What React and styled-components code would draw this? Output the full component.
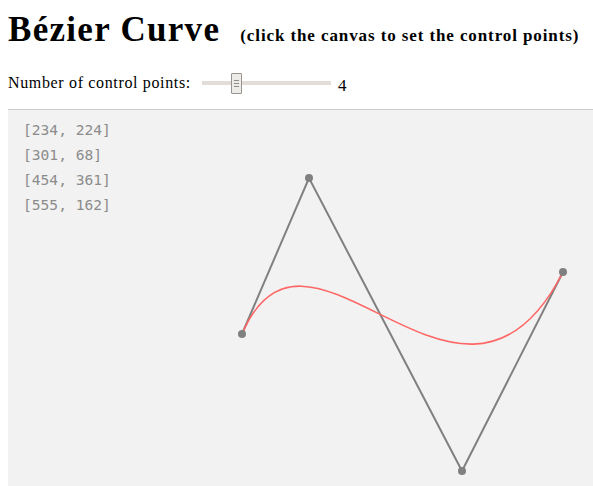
import React from 'react'
import styled, { createGlobalStyle } from 'styled-components'

const GlobalStyle = createGlobalStyle`
    html, body {
        overflow: hidden;
    }
    body {
        margin: 8px 0 0 8px;
        font-family: "Liberation Serif", "DejaVu Serif", serif;
        color: #000;
        background: #fff;
    }
`

const points = [
    [234, 224],
    [301, 68],
    [454, 361],
    [555, 162]
]

const App = () => {
    const [count, setCount] = React.useState(4)
    const [p0, p1, p2, p3] = points
    const polyline = points.map(([x, y]) => `${x},${y}`).join(' ')
    const curve = `M${p0[0]} ${p0[1]} C${p1[0]} ${p1[1]} ${p2[0]} ${p2[1]} ${p3[0]} ${p3[1]}`
    return (
        <>
            <GlobalStyle />
            <Header>
                <Title>Bézier Curve</Title>
                <Hint>(click the canvas to set the control points)</Hint>
            </Header>
            <Controls>
                <Label htmlFor='count'>Number of control points:</Label>
                <Range
                    id='count'
                    type='range'
                    min={2}
                    max={10}
                    value={count}
                    onChange={(e) => setCount(Number(e.target.value))}
                />
                <Value>{count}</Value>
            </Controls>
            <Board>
                <svg width='600' height='400' viewBox='0 0 600 400'>
                    {points.map(([x, y], i) => (
                        <Coord key={i} x='15' y={25 * (i + 1)}>
                            [{x}, {y}]
                        </Coord>
                    ))}
                    <polyline points={polyline} fill='none' stroke='#808080' strokeWidth='2' />
                    <path d={curve} fill='none' stroke='#ff6666' strokeWidth='1.6' />
                    {points.map(([x, y], i) => (
                        <circle key={i} cx={x} cy={y} r='4' fill='#808080' />
                    ))}
                </svg>
            </Board>
        </>
    )
}

const Header = styled.div`
    display: flex;
    align-items: baseline;
    gap: 20px;
    margin-top: 5px;
`

const Title = styled.h1`
    margin: 0;
    font-size: 35px;
    line-height: 34px;
    font-weight: bold;
    letter-spacing: 1.3px;
`

const Hint = styled.span`
    font-size: 17px;
    font-weight: bold;
    letter-spacing: 0.9px;
`

const Controls = styled.div`
    display: flex;
    align-items: center;
    margin-top: 24px;
    height: 24px;
`

const Label = styled.label`
    font-size: 16px;
    letter-spacing: 0.65px;
`

const Range = styled.input`
    -webkit-appearance: none;
    appearance: none;
    width: 129px;
    height: 21px;
    margin: 0 7px 0 11px;
    background: transparent;
    &::-webkit-slider-runnable-track {
        height: 4px;
        background: #e2ddd8;
        border: none;
    }
    &::-webkit-slider-thumb {
        -webkit-appearance: none;
        width: 11px;
        height: 21px;
        margin-top: -8.5px;
        box-sizing: border-box;
        border: 1px solid #98938e;
        border-radius: 1px;
        background-color: #ecebe8;
        background-image: linear-gradient(#8d8d8d, #8d8d8d), linear-gradient(#8d8d8d, #8d8d8d), linear-gradient(#8d8d8d, #8d8d8d);
        background-size: 5px 1px;
        background-repeat: no-repeat;
        background-position: center 6px, center 9px, center 12px;
    }
`

const Value = styled.span`
    font-size: 17px;
    position: relative;
    top: 3px;
`

const Board = styled.div`
    margin-top: 14px;
    margin-left: -1px;
    width: 600px;
    height: 400px;
    border: 1px solid #cccccc;
    background: #f2f2f2;
    svg {
        display: block;
    }
`

const Coord = styled.text`
    font-family: "DejaVu Sans Mono", "Liberation Mono", monospace;
    font-size: 14.6px;
    fill: #8c8c8c;
`

export default App
